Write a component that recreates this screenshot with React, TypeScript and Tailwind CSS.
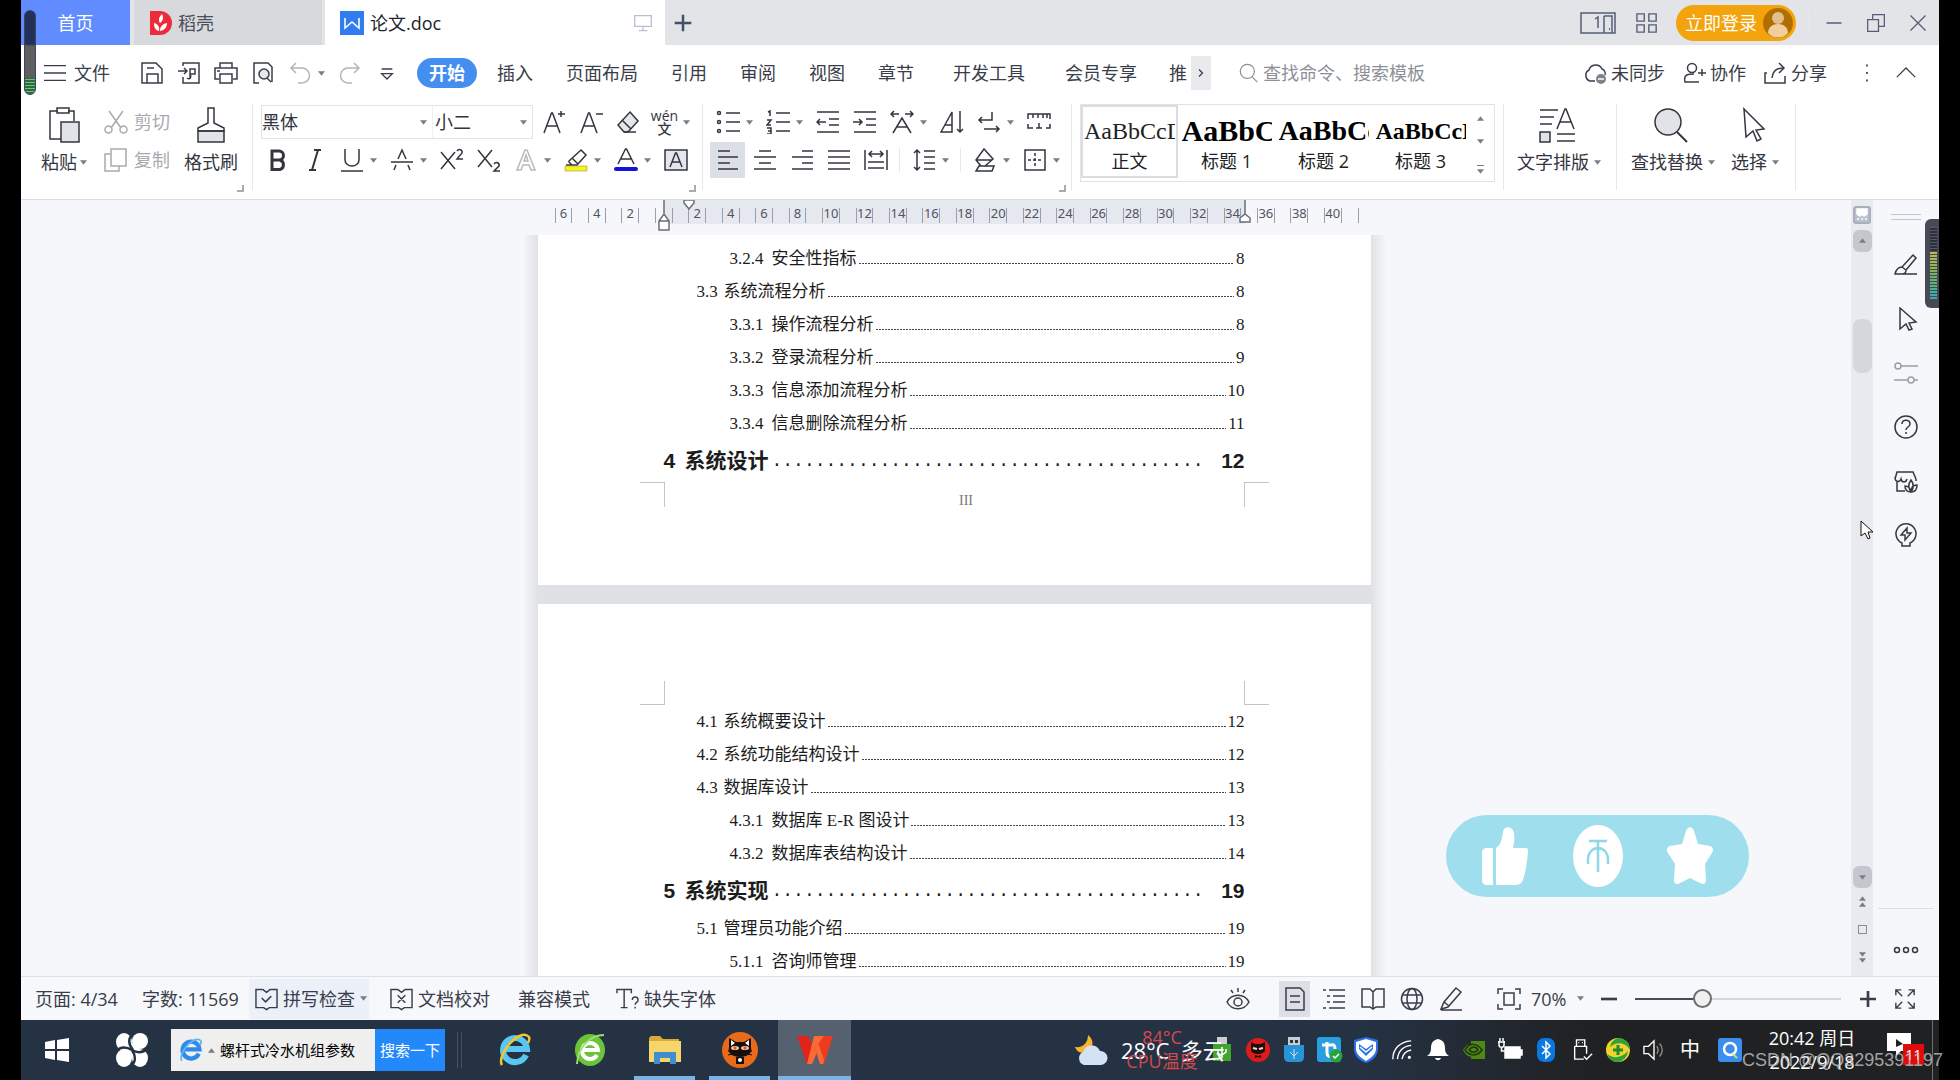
import type { ReactNode } from "react";

type SvgProps = { children: ReactNode; className?: string; box?: string };

function Svg({ children, className = "w-6 h-6", box = "0 0 24 24" }: SvgProps) {
  return (
    <svg
      viewBox={box}
      className={`shrink-0 ${className}`}
      fill="none"
      stroke="currentColor"
      strokeWidth="1.5"
      aria-hidden="true"
    >
      {children}
    </svg>
  );
}

function Caret() {
  return (
    <svg viewBox="0 0 8 5" className="w-[7px] h-[5px] shrink-0" aria-hidden="true">
      <path d="M0 0h8L4 5z" fill="#7b7d84" />
    </svg>
  );
}

function Sep({ className = "h-8" }: { className?: string }) {
  return <div className={`w-px shrink-0 bg-[#e6e7ea] ${className}`} />;
}

type ToolProps = { label: string; caret?: boolean; active?: boolean; children: ReactNode };

function Tool({ label, caret, active, children }: ToolProps) {
  return (
    <button type="button" aria-label={label} className={caret ? "flex items-center w-[50px] h-9" : "flex items-center w-[37px] h-9"}>
      <span className={active ? "flex items-center justify-center w-[35px] h-9 mx-px bg-[#dcdfe5]" : "flex items-center justify-center w-[37px] h-9"}>
        {children}
      </span>
      {caret && <Caret />}
    </button>
  );
}

/* ---------- title bar ---------- */

function TitleBar() {
  return (
    <header className="flex h-[45px] shrink-0 bg-[#e2e4e7] text-lg leading-6">
      <button type="button" className="w-[109px] bg-[#618cff] text-white">首页</button>
      <button type="button" className="flex items-center gap-[6px] w-[188px] ml-1 pl-4 bg-[#d8d9dc] text-[#4b4e5c]">
        <svg viewBox="0 0 22 24" className="w-[22px] h-6" aria-hidden="true">
          <path d="M0 0h10a12 12 0 0 1 0 24H0z" fill="#ea2c3c" />
          <path d="M10 12c-2-3-1-6 2-9 2 4 1 7-2 9zM9 20c-4-1-5-4-5-8 4 1 6 4 5 8zM10 20c0-4 2-7 7-8 0 4-2 7-7 8z" fill="#fff" />
        </svg>
        稻壳
      </button>
      <div className="flex items-center w-[340px] ml-[3px] pl-[15px] pr-3 bg-white text-[#22242c]">
        <svg viewBox="0 0 24 24" className="w-6 h-6 mr-[6px]" aria-hidden="true">
          <path d="M0 0h24v24H0z" fill="#2f7df0" />
          <path d="M5 7v10l7-6 7 6V7" fill="none" stroke="#fff" strokeWidth="1.6" />
        </svg>
        论文.doc
        <Svg className="w-5 h-5 ml-auto text-[#b9bfd0]">
          <path d="M2 3h20v13H2zM12 16v5M7 21h10" />
        </Svg>
      </div>
      <button type="button" aria-label="新建标签" className="w-9 flex items-center justify-center text-[#454f68]">
        <Svg className="w-5 h-5"><path d="M12 2v20M2 12h20" strokeWidth="3" /></Svg>
      </button>
      <div className="flex items-center ml-auto text-[#555d78]">
        <button type="button" aria-label="窗口布局">
          <Svg box="0 0 36 22" className="w-9 h-[22px]">
            <path d="M1 1h34v20H1zM24 4h8v17M24 4v17M15 7l3-2v11" />
            <path d="M29 17h1" strokeWidth="2" />
          </Svg>
        </button>
        <button type="button" aria-label="全部应用" className="ml-5">
          <Svg className="w-[22px] h-[22px]"><path d="M1 2h8v8H1zM14 2h8v8h-8zM1 14h8v8H1zM14 14h8v8h-8z" /></Svg>
        </button>
        <button type="button" className="flex items-center justify-between w-[120px] h-9 ml-[18px] pl-[9px] pr-[3px] rounded-full bg-[#f3a40c] text-white">
          立即登录
          <svg viewBox="0 0 30 30" className="w-[30px] h-[30px]" aria-hidden="true">
            <circle cx="15" cy="15" r="15" fill="#b06f00" />
            <circle cx="15" cy="10" r="6" fill="#e2c08a" />
            <path d="M5 25c0-12 20-12 20 0-5 6-15 6-20 0z" fill="#f1cf9c" />
          </svg>
        </button>
        <Sep className="h-7 ml-3 mr-1" />
        <button type="button" aria-label="最小化" className="flex items-center justify-center w-[42px] h-9">
          <Svg className="w-[18px] h-[18px]"><path d="M2 12h20" strokeWidth="2" /></Svg>
        </button>
        <button type="button" aria-label="还原" className="flex items-center justify-center w-[42px] h-9">
          <Svg className="w-5 h-5"><path d="M2 8h13v14H2zM8 8V2h14v14h-7" /></Svg>
        </button>
        <button type="button" aria-label="关闭" className="flex items-center justify-center w-[42px] h-9">
          <Svg className="w-5 h-5"><path d="M3 3l18 18M21 3L3 21" /></Svg>
        </button>
      </div>
    </header>
  );
}

/* ---------- menu row ---------- */

function MenuRow() {
  return (
    <nav className="flex items-center h-14 shrink-0 pl-[23px] bg-white text-lg leading-6 text-[#3a3d49]">
      <button type="button" className="flex items-center gap-2">
        <Svg className="w-[22px] h-6"><path d="M0 4h24M0 12h24M0 20h24" /></Svg>
        文件
      </button>
      <Sep className="ml-4 mr-[6px]" />
      <Tool label="保存"><Svg><path d="M2 2h14l6 6v14H2zM7 22v-9h11v9M7 7h7" /></Svg></Tool>
      <Tool label="输出为PDF"><Svg><path d="M6 5V2h16v20H6v-6M1 10h9M7 7l3 3-3 3M13 18V8h5v5h-5M10 17c3 2 5-1 3-4" /></Svg></Tool>
      <Tool label="打印"><Svg><path d="M6 7V2h12v5M5 18H1V7h22v11h-4M6 13h12v9H6zM3 10h3" /></Svg></Tool>
      <Tool label="打印预览"><Svg><path d="M8 22H3V2h14l4 4v15M20 21l-4-4" /><circle cx="13" cy="13" r="5" fill="#e4e6ec" /></Svg></Tool>
      <div className="flex text-[#b2b4ba]">
        <Tool label="撤销" caret><Svg><path d="M8 2L3 7l5 5M3 7h11a7 7 0 0 1 0 15h-4" /></Svg></Tool>
        <Tool label="恢复"><Svg><path d="M16 2l5 5-5 5M21 7H10a7 7 0 0 0 0 15h4" /></Svg></Tool>
      </div>
      <Tool label="更多"><Svg className="w-4 h-4"><path d="M4 6h16M4 13h16l-8 8z" strokeWidth="2" /></Svg></Tool>
      <Sep className="mr-[11px]" />
      <button type="button" className="w-[60px] h-[30px] rounded-full bg-[#448ef0] font-bold text-white">开始</button>
      <div className="flex gap-[33px] ml-5">
        <button type="button">插入</button>
        <button type="button">页面布局</button>
        <button type="button">引用</button>
        <button type="button">审阅</button>
        <button type="button">视图</button>
        <button type="button">章节</button>
      </div>
      <div className="flex gap-10 ml-[39px]">
        <button type="button">开发工具</button>
        <button type="button">会员专享</button>
      </div>
      <button type="button" className="w-[22px] ml-8 overflow-hidden text-left">推</button>
      <button type="button" aria-label="向右滚动" className="flex items-center justify-center w-5 h-[34px] bg-[#e8eaee]">
        <Svg className="w-3 h-3"><path d="M8 5l7 7-7 7" strokeWidth="2.500" /></Svg>
      </button>
      <label className="flex items-center gap-1 ml-7 text-[#8d9099]">
        <Svg className="w-5 h-6"><circle cx="10" cy="10" r="8.500" /><path d="M16 17l6 6" /></Svg>
        <input aria-label="搜索" placeholder="查找命令、搜索模板" className="w-[220px] outline-none placeholder:text-[#8d9099]" />
      </label>
      <div className="flex items-center gap-[17px] ml-auto">
        <button type="button" className="flex items-center gap-1">
          <Svg><path d="M12 20H7a6 6 0 0 1-1-11 7 7 0 0 1 13-1 5 5 0 0 1 3 6" /><circle cx="18" cy="18" r="5" fill="#7d8290" stroke="none" /><path d="M15 18h6" stroke="#fff" /></Svg>
          未同步
        </button>
        <button type="button" className="flex items-center gap-1">
          <Svg><circle cx="10" cy="7" r="4.500" /><path d="M17 21H3c-2-8 4-8 9-8M20 8v7M16 12h8" /></Svg>
          协作
        </button>
        <button type="button" className="flex items-center gap-1">
          <Svg><path d="M4 12H2v10h20v-7M16 2l5 5-5 5M21 7c-8 0-11 3-12 10" /></Svg>
          分享
        </button>
      </div>
      <Sep className="ml-[14px]" />
      <button type="button" aria-label="选项" className="flex justify-center w-[50px]">
        <Svg className="w-5 h-5"><path d="M11 3h2M11 12h2M11 21h2" strokeWidth="2.500" /></Svg>
      </button>
      <button type="button" aria-label="收起功能区" className="flex justify-center w-7 mr-[19px]">
        <Svg className="w-5 h-5"><path d="M1 17L12 6l11 11" /></Svg>
      </button>
    </nav>
  );
}

/* ---------- ribbon ---------- */

function Corner() {
  return <div className="w-[7px] h-[7px] self-end mt-[7px] border-r-2 border-b-2 border-[#a9abb2]" />;
}

function ClipboardGroup() {
  return (
    <div className="flex flex-col w-[231px] pl-4 pr-2">
      <div className="flex">
        <button type="button" className="flex flex-col items-center w-[54px] pt-[3px]">
          <Svg box="0 0 32 36" className="w-8 h-9">
            <path d="M10 4H2v28h12M20 4h6v10M9 1h12v5H9z" />
            <path d="M13 15h18v20H13z" fill="#e1e3e9" />
          </Svg>
          <span className="flex items-center gap-[3px] mt-[7px]">粘贴 <Caret /></span>
        </button>
        <div className="flex flex-col gap-[2px] ml-[13px] text-[#a8aab0]">
          <button type="button" className="flex items-center gap-[6px] h-9">
            <Svg><path d="M5 1l12 17M19 1L7 18" /><circle cx="4.500" cy="19.500" r="3.500" /><circle cx="19.500" cy="19.500" r="3.500" /></Svg>
            剪切
          </button>
          <button type="button" className="flex items-center gap-[6px] h-9">
            <Svg><path d="M7 1h15v17H7zM7 6H1v17h14v-5" /></Svg>
            复制
          </button>
        </div>
        <button type="button" className="flex flex-col items-center w-[54px] ml-[14px] pt-[3px]">
          <Svg box="0 0 28 36" className="w-7 h-9">
            <path d="M1 24h26v11H1z" fill="#e1e3e9" />
            <path d="M11 1h6v15l10 5v3H1v-3l10-5z" />
          </Svg>
          <span className="mt-[7px]">格式刷</span>
        </button>
      </div>
      <Corner />
    </div>
  );
}

function FontGroup() {
  return (
    <div className="flex flex-col ml-[6px]">
      <div className="flex items-center h-9 ml-[2px]">
        <div className="flex h-[34px] mr-[2px] border border-[#e1e2e6]">
          <label className="flex items-center w-[171px] pr-[5px] border-r border-[#eeeff2]">
            <select aria-label="字体" defaultValue="黑体" className="flex-1 appearance-none outline-none">
              <option>黑体</option>
              <option>宋体</option>
            </select>
            <Caret />
          </label>
          <label className="flex items-center w-[99px] pl-[2px] pr-[5px]">
            <select aria-label="字号" defaultValue="小二" className="flex-1 min-w-0 appearance-none outline-none">
              <option>小二</option>
              <option>小四</option>
            </select>
            <Caret />
          </label>
        </div>
        <Tool label="增大字号"><Svg><path d="M2 23L9.500 3h1L18 23M5 16h10M19 1v6M16 4h7" /></Svg></Tool>
        <Tool label="减小字号"><Svg><path d="M2 23L9.500 3h1L18 23M5 16h10M17 4h7" /></Svg></Tool>
        <Tool label="清除格式"><Svg><path d="M14 2l8 9-10 11H8l-6-7z" fill="#e4e6ec" /><path d="M6 10l9 9M8 22h12" /></Svg></Tool>
        <Tool label="拼音指南" caret>
          <span className="flex flex-col items-center text-sm leading-[13px] font-medium">
            <span>wén</span>
            <span>文</span>
          </span>
        </Tool>
      </div>
      <div className="flex items-center h-9 mt-[2px]">
        <Tool label="加粗"><Svg><path d="M6 3h7a4.500 4.500 0 0 1 0 9H6zM6 12h8a5 5 0 0 1 0 9.500H6z" strokeWidth="3" /></Svg></Tool>
        <Tool label="倾斜"><Svg><path d="M11 2h7M6 22h7M15 2L9 22" strokeWidth="2" /></Svg></Tool>
        <Tool label="下划线" caret><Svg><path d="M5 1v11a7 6 0 0 0 14 0V1M1 23h22" /></Svg></Tool>
        <Tool label="删除线" caret><Svg><path d="M1 14h22M8 11l4-9 4 9M6 17l-2 5M18 17l2 5" /></Svg></Tool>
        <Tool label="上标"><Svg><path d="M1 4l14 17M15 4L1 21M17 3c2-3 6-1 5 2l-5 6h6" /></Svg></Tool>
        <Tool label="下标"><Svg><path d="M1 2l14 17M15 2L1 19M17 16c2-3 6-1 5 2l-5 5h6" /></Svg></Tool>
        <Tool label="文字效果" caret><Svg className="w-6 h-6 text-[#b7b9c0]"><path d="M3 22L11 2h2l8 20h-4l-2-5H9l-2 5zM10 13h4l-2-6z" /></Svg></Tool>
        <Tool label="突出显示" caret>
          <Svg>
            <path d="M17 2l5 5-9 10H8l-3-3v-1zM8 10l6 6M2 17h7" />
            <path d="M1 18h22v5H1z" fill="#f9f11b" stroke="#8b8b3a" strokeWidth="0.5" />
          </Svg>
        </Tool>
        <Tool label="字体颜色" caret>
          <Svg>
            <path d="M4 16L11.500 1h1L20 16M7 11h10" />
            <path d="M2 21h20" stroke="#1414d8" strokeWidth="4" strokeLinecap="round" />
          </Svg>
        </Tool>
        <Tool label="字符底纹"><Svg><path d="M1 2h22v20H1z" fill="#e4e6ec" /><path d="M6 19l5.500-14h1L18 19M8 14h8" /></Svg></Tool>
      </div>
      <Corner />
    </div>
  );
}

function ParagraphGroup() {
  return (
    <div className="flex flex-col ml-[6px]">
      <div className="flex items-center h-9">
        <Tool label="项目符号" caret><Svg><path d="M10 3h14M10 12h14M10 21h14" /><circle cx="3" cy="3" r="1.500" /><circle cx="3" cy="12" r="1.500" /><circle cx="3" cy="21" r="1.500" /></Svg></Tool>
        <Tool label="编号" caret><Svg><path d="M10 3h14M10 12h14M10 21h14M2 2l2-1v5M1 10h4l-4 5h4M1 18h4v6H1M2 21h3" /></Svg></Tool>
        <Tool label="减少缩进量"><Svg><path d="M1 2h22M13 9h10M13 15h10M1 22h22M1 12h9M4 9l-3 3 3 3" /></Svg></Tool>
        <Tool label="增加缩进量"><Svg><path d="M1 2h22M13 9h10M13 15h10M1 22h22M0 12h9M6 9l3 3-3 3" /></Svg></Tool>
        <Tool label="中文版式" caret><Svg><path d="M3 23L12 8l9 15M7 17h10M1 4h8M4 1L1 4l3 3M23 4h-8M20 1l3 3-3 3" /></Svg></Tool>
        <Tool label="排序"><Svg><path d="M1 22L12 2v20zM5 15h7M20 1v21M17 19l3 3 3-3" /></Svg></Tool>
        <Tool label="换行标记" caret><Svg><path d="M15 2v8H2M5 7l-3 3 3 3M7 19h15M19 16l3 3-3 3" /></Svg></Tool>
        <Tool label="制表位"><Svg><path d="M1 9V4h22v5M6 4v4M11 4v4M16 4v4M20 4v4M1 14v4h5M9 18h6M12 13v5M23 14v4h-4" /></Svg></Tool>
      </div>
      <div className="flex items-center h-9 mt-[2px]">
        <Tool label="左对齐" active><Svg><path d="M2 3h12M2 9h20M2 15h12M2 21h20" /></Svg></Tool>
        <Tool label="居中"><Svg><path d="M6 3h12M1 9h22M6 15h12M1 21h22" /></Svg></Tool>
        <Tool label="右对齐"><Svg><path d="M12 3h11M2 9h21M12 15h11M2 21h21" /></Svg></Tool>
        <Tool label="两端对齐"><Svg><path d="M1 3h22M1 9h22M1 15h22M1 21h22" /></Svg></Tool>
        <Tool label="分散对齐"><Svg><path d="M1 2v20M23 2v20M5 6h14M8 3L5 6l3 3M16 3l3 3-3 3M4 14h16M4 20h16" /></Svg></Tool>
        <div className="flex justify-center w-[11px]"><Sep className="h-6" /></div>
        <Tool label="行距" caret><Svg><path d="M5 2v20M2 5l3-3 3 3M2 19l3 3 3-3M12 3h11M12 9h11M12 15h11M12 21h11" /></Svg></Tool>
        <div className="flex justify-center w-[11px]"><Sep className="h-6" /></div>
        <Tool label="底纹颜色" caret><Svg><path d="M11 1l9 10-8 7H8l-5-6zM3 12h16M6 18h15l-2 5H3z" /></Svg></Tool>
        <Tool label="边框" caret><Svg><path d="M2 2h20v20H2z" /><path d="M12 5v14M5 12h14" strokeDasharray="3 2" /></Svg></Tool>
      </div>
      <Corner />
    </div>
  );
}

/* the sample line is cut off by the cell, as in the gallery of any word processor */
const styles = [
  { name: "标题 1", sample: "AaBbC", look: "text-[30px]" },
  { name: "标题 2", sample: "AaBbCc", look: "text-[28px]" },
  { name: "标题 3", sample: "AaBbCcD", look: "text-2xl" },
];

function StyleGallery() {
  return (
    <div className="flex w-[415px] h-[78px] ml-2 border border-[#e1e2e6] text-[#222]">
      <button type="button" className="flex flex-col items-center w-[97px] h-[73px] pt-[6px] border-2 border-[#dcdde2] overflow-hidden">
        <span className="w-[91px] overflow-hidden text-left text-2xl leading-9 whitespace-nowrap font-['Liberation_Serif']">AaBbCcD</span>
        <span>正文</span>
      </button>
      {styles.map((s) => (
        <button key={s.name} type="button" className="flex flex-col items-center w-[97px] pt-2 px-[2px]">
          <span className={`w-[90px] overflow-hidden whitespace-nowrap text-left leading-9 font-bold text-black font-['Liberation_Serif'] ${s.look}`}>
            {s.sample}
          </span>
          <span>{s.name}</span>
        </button>
      ))}
      <div className="flex flex-col items-center w-[22px] pt-2 gap-[18px]">
        <button type="button" aria-label="上一行" className="flex h-2 rotate-180"><Caret /></button>
        <button type="button" aria-label="下一行" className="flex h-2"><Caret /></button>
        <button type="button" aria-label="更多样式" className="flex flex-col items-center gap-[3px]">
          <span className="w-[7px] h-px bg-[#7b7d84]" />
          <Caret />
        </button>
      </div>
    </div>
  );
}

function BigButton({ label, children }: { label: string; children: ReactNode }) {
  return (
    <button type="button" className="flex flex-col items-center pt-[3px]">
      <span className="pr-1">{children}</span>
      <span className="flex items-center gap-[5px] mt-[7px]">{label} <Caret /></span>
    </button>
  );
}

function Ribbon() {
  return (
    <section className="flex h-[99px] shrink-0 pt-[3px] bg-white border-b border-[#dcdee3] text-lg leading-6 text-[#33363f]">
      <ClipboardGroup />
      <Sep className="h-[86px]" />
      <FontGroup />
      <Sep className="h-[86px] ml-[6px]" />
      <ParagraphGroup />
      <Sep className="h-[86px] ml-[5px]" />
      <StyleGallery />
      <Sep className="h-[86px] ml-2 mr-[13px]" />
      <BigButton label="文字排版">
        <Svg box="0 0 36 36" className="w-9 h-9"><path d="M1 3h18M1 10h14M1 17h12M18 34h18M18 27h18M18 22L26 2h1l8 20M21 15h11" /><path d="M1 25h10v10H1z" fill="#e1e3e9" /></Svg>
      </BigButton>
      <Sep className="h-[86px] ml-[15px] mr-[14px]" />
      <BigButton label="查找替换">
        <Svg box="0 0 36 36" className="w-9 h-9"><circle cx="15" cy="15" r="13" fill="#e1e3e9" /><path d="M24 25l10 10" strokeWidth="2" /></Svg>
      </BigButton>
      <div className="ml-4">
        <BigButton label="选择">
          <Svg box="0 0 36 36" className="w-9 h-9"><path d="M9 2l20 20-8 1 5 9-4 2-4-10-7 6z" /></Svg>
        </BigButton>
      </div>
      <Sep className="h-[86px] ml-4" />
    </section>
  );
}

/* ---------- document ---------- */

const rulerMarks = ["6", "4", "2", ""];
for (let n = 2; n <= 40; n += 2) rulerMarks.push(String(n));

function Ruler() {
  return (
    <div className="relative w-[833px] h-[35px] pl-[17px] pr-3 pt-2 mx-auto">
      <div className="absolute left-[126px] top-0 w-[581px] h-6 bg-[#e6e8ef]" />
      <div className="relative flex h-[15px] border-r border-[#9c9fab] text-[13px] leading-[11px] text-[#50545f] font-['Noto_Sans']">
        {rulerMarks.map((m, i) => (
          <div key={i} className="flex flex-1">
            <div className="flex flex-1 justify-center border-l border-[#9c9fab]">
              <span className="w-0 flex justify-center">{m}</span>
            </div>
            <div className="flex-1 border-l border-[#9c9fab]" />
          </div>
        ))}
      </div>
      <Svg box="0 0 12 36" className="absolute left-[120px] top-0 w-3 h-9 text-[#6b6e78]">
        <path d="M6 0v14M1 21l5-7 5 7v9H1zM1 21h10" fill="#fff" />
      </Svg>
      <Svg box="0 0 12 10" className="absolute left-[145px] top-0 w-3 h-[10px] text-[#6b6e78]">
        <path d="M1 0h10v3L6 9 1 3z" fill="#fff" />
      </Svg>
      <Svg box="0 0 12 24" className="absolute left-[701px] top-0 w-3 h-6 text-[#6b6e78]">
        <path d="M6 0v14M1 18l5-4 5 4v4H1z" fill="#fff" />
      </Svg>
    </div>
  );
}

type Entry = { level: 1 | 2 | 3; no: string; title: string; page: string };

const firstPage: Entry[] = [
  { level: 3, no: "3.2.4", title: "安全性指标", page: "8" },
  { level: 2, no: "3.3", title: "系统流程分析", page: "8" },
  { level: 3, no: "3.3.1", title: "操作流程分析", page: "8" },
  { level: 3, no: "3.3.2", title: "登录流程分析", page: "9" },
  { level: 3, no: "3.3.3", title: "信息添加流程分析", page: "10" },
  { level: 3, no: "3.3.4", title: "信息删除流程分析", page: "11" },
  { level: 1, no: "4", title: "系统设计", page: "12" },
];

const secondPage: Entry[] = [
  { level: 2, no: "4.1", title: "系统概要设计", page: "12" },
  { level: 2, no: "4.2", title: "系统功能结构设计", page: "12" },
  { level: 2, no: "4.3", title: "数据库设计", page: "13" },
  { level: 3, no: "4.3.1", title: "数据库 E-R 图设计", page: "13" },
  { level: 3, no: "4.3.2", title: "数据库表结构设计", page: "14" },
  { level: 1, no: "5", title: "系统实现", page: "19" },
  { level: 2, no: "5.1", title: "管理员功能介绍", page: "19" },
  { level: 3, no: "5.1.1", title: "咨询师管理", page: "19" },
];

const dots = ".".repeat(40);

function TocRow({ level, no, title, page }: Entry) {
  if (level === 1) {
    return (
      <li className="flex items-center h-[42px] text-[21px] leading-7 font-bold font-['Liberation_Sans','Noto_Sans_CJK_SC',sans-serif]">
        <span className="w-[21px]">{no}</span>
        <span>{title}</span>
        <span className="flex-1 pl-[3px] overflow-hidden text-lg leading-7 font-normal font-['Liberation_Mono']">{dots}</span>
        <span>{page}</span>
      </li>
    );
  }
  return (
    <li
      className={
        level === 2
          ? "flex items-center h-[33px] pl-[33px] text-[17px] leading-6"
          : "flex items-center h-[33px] pl-[66px] text-[17px] leading-6"
      }
    >
      <span className={level === 2 ? "w-[27px]" : "w-[42px]"}>{no}</span>
      <span>{title}</span>
      <span className="flex-1 self-end h-px mx-[2px] mb-[11px] bg-[repeating-linear-gradient(90deg,#444_0_2px,transparent_2px_3px)]" />
      <span>{page}</span>
    </li>
  );
}

function Document() {
  return (
    <main className="flex flex-col flex-1 min-w-0 pl-9 bg-[#f5f7fb]">
      <Ruler />
      <div className="flex-1 min-h-0 overflow-hidden">
        <div className="w-[861px] mx-auto px-[14px] bg-[linear-gradient(90deg,#f3f5f9_0,#dfe1e5_14px,#dfe1e5_calc(100%-14px),#f3f5f9_100%)] text-[#1c1c1c] font-['Liberation_Serif','Noto_Sans_CJK_SC',serif]">
          <div className="h-[350px] pt-[7px] bg-white">
            <ol className="px-[126px]">
              {firstPage.map((e) => <TocRow key={e.no} {...e} />)}
            </ol>
            <div className="flex justify-between px-[102px]">
              <div className="w-[25px] h-[25px] border-t border-r border-[#c4c4c8]" />
              <span className="pt-[10px] pl-6 text-sm leading-[18px] text-[#777]">III</span>
              <div className="w-[25px] h-[25px] border-t border-l border-[#c4c4c8]" />
            </div>
          </div>
          <div className="h-[450px] mt-[19px] pt-[77px] bg-white">
            <div className="flex justify-between px-[102px]">
              <div className="w-[25px] h-6 border-b border-r border-[#c4c4c8]" />
              <div className="w-[25px] h-6 border-b border-l border-[#c4c4c8]" />
            </div>
            <ol className="px-[126px]">
              {secondPage.map((e) => <TocRow key={e.no} {...e} />)}
            </ol>
          </div>
        </div>
      </div>
    </main>
  );
}

function ScrollColumn() {
  return (
    <div className="flex flex-col items-center w-[22px] pt-[6px] pb-[5px] bg-[#e9eaef] text-[#8a8c98]">
      <button type="button" aria-label="标尺">
        <svg viewBox="0 0 18 18" className="w-[18px] h-[18px]" aria-hidden="true">
          <rect x="1" y="1" width="16" height="16" rx="2" fill="#b9c0ce" stroke="#a9afbd" strokeWidth="2" />
          <path d="M4 3h10v5l-3 2-2-2-2 2-3-2zM4 13h2M8 13h2M12 13h2" fill="#fff" stroke="#fff" strokeWidth="1.500" />
        </svg>
      </button>
      <button type="button" aria-label="向上" className="flex items-center justify-center w-[19px] h-[22px] mt-[6px] rounded-md bg-[#c6c6ce] rotate-180"><Caret /></button>
      <div className="w-[19px] h-[54px] mt-[67px] rounded-lg bg-[#d6d7dc]" />
      <button type="button" aria-label="向下" className="flex items-center justify-center w-[19px] h-[22px] mt-auto rounded-md bg-[#c6c6ce]"><Caret /></button>
      <button type="button" aria-label="上一页" className="flex flex-col items-center justify-center gap-px h-7 rotate-180"><Caret /><Caret /></button>
      <button type="button" aria-label="选择浏览对象" className="flex items-center h-[27px]"><span className="w-[9px] h-[9px] border border-[#8a8c98]" /></button>
      <button type="button" aria-label="下一页" className="flex flex-col items-center justify-center gap-px h-7"><Caret /><Caret /></button>
    </div>
  );
}

function SideBar() {
  const cell = "flex items-center justify-center w-full h-[54px]";
  return (
    <aside className="flex flex-col items-center w-[66px] pt-[14px] bg-[#f5f7fb] text-[#363943]">
      <div className="w-[30px] h-[6px] mb-[18px] border-y border-[#c3c5cc]" />
      <button type="button" aria-label="批注" className={cell}><Svg><path d="M8 14L19 2l3 3L12 17M8 14c-4 0-6 3-7 7h22M8 14l4 3c0 3-2 4-4 4" /></Svg></button>
      <button type="button" aria-label="选择" className={cell}><Svg><path d="M6 1l16 14-7 1 3 6-3 1-3-6-6 5z" /></Svg></button>
      <button type="button" aria-label="属性" className={`${cell} text-[#9b9da5]`}><Svg><circle cx="4" cy="5" r="3" /><path d="M7 5h17M0 19h14M20 19h4" /><circle cx="17" cy="19" r="3" /></Svg></button>
      <button type="button" aria-label="帮助" className={cell}><Svg><circle cx="12" cy="12" r="11" /><path d="M8 9c0-5 8-5 8 0 0 3-4 3-4 6M12 17v2" /></Svg></button>
      <button type="button" aria-label="稻壳商城" className={cell}><Svg><path d="M11 22H3V12M1 10l2-7h16l3 7M1 8c0 6 5 5 6 2 1 4 5 4 6 0M22 10v2" /><path d="M17 11c-3 4-3 8 0 12 3-4 3-8 0-12zM17 23c-4 0-6-2-6-6 3 0 5 2 6 6zM17 23c0-4 2-7 6-7 0 4-2 7-6 7z" /></Svg></button>
      <button type="button" aria-label="智能" className={cell}><Svg><path d="M8 20a10 10 0 1 1 8 0v3H8zM13 5l-6 7h4v5l6-7h-4z" /></Svg></button>
      <button type="button" aria-label="更多工具" className="flex justify-center w-14 h-[68px] mt-auto pt-7 border-t border-[#dddfe5]">
        <Svg className="w-[26px] h-[26px]" box="0 0 26 26"><circle cx="4" cy="13" r="2.500" /><circle cx="13" cy="13" r="2.500" /><circle cx="22" cy="13" r="2.500" /></Svg>
      </button>
    </aside>
  );
}

/* Floating like / coin / favourite bar that lies over the document */
function ReactionPill() {
  return (
    <div className="absolute right-[190px] bottom-[79px] flex items-center justify-between w-[303px] h-[82px] px-9 rounded-full bg-[#9fdfed] text-white">
      <button type="button" aria-label="点赞">
        <svg viewBox="0 0 46 58" className="w-[46px] h-[58px]" fill="#fff" aria-hidden="true">
          <path d="M5 21h6v37H5c-3 0-5-2-5-6V26c0-3 2-5 5-5zM14 21c5-3 6-9 7-16 1-7 10-6 11 1 1 6 0 10-1 15h13c2 0 2 2 2 4-1 12-3 22-5 28-1 3-4 5-8 5H14z" />
        </svg>
      </button>
      <button type="button" aria-label="投币">
        <svg viewBox="0 0 50 62" className="w-[50px] h-[62px]" aria-hidden="true">
          <ellipse cx="25" cy="31" rx="25" ry="31" fill="#fff" />
          <path d="M16 16h18M25 16v31M15 39v-4c0-16 20-16 20 0v4" fill="none" stroke="#8fd8e8" strokeWidth="2.500" />
        </svg>
      </button>
      <button type="button" aria-label="收藏">
        <svg viewBox="0 0 46 58" className="w-[46px] h-[58px]" fill="#fff" aria-hidden="true">
          <path d="M19 4c2-5 6-5 8 0l4 13 12 2c3 1 4 4 2 7l-7 11 1 16c0 4-3 5-6 3l-10-5-10 5c-3 2-6 1-6-3l1-16-7-11c-2-3-1-6 2-7l12-2z" />
        </svg>
      </button>
    </div>
  );
}

/* ---------- status bar ---------- */

function StatusBar() {
  const cell = "flex items-center justify-center w-[39px] h-9";
  return (
    <footer className="flex items-center h-11 shrink-0 pl-[14px] pr-[15px] bg-[#f6f8fb] border-t border-[#dcdfe4] text-lg leading-6 text-[#3a3d49]">
      <span className="w-[107px]">页面: 4/34</span>
      <span className="w-[107px]">字数: 11569</span>
      <button type="button" className="flex items-center gap-[5px] w-[120px] h-10 pl-[6px] bg-[#ebf0f9]">
        <Svg className="w-[23px] h-6"><path d="M8 2H1v19h8l3 2 3-2h8V2h-7M8 2l4 3 4-3M7 11l4 4 6-6" /></Svg>
        拼写检查
        <Caret />
      </button>
      <button type="button" className="flex items-center gap-[5px] ml-[21px]">
        <Svg className="w-[23px] h-6"><path d="M8 2H1v19h8l3 2 3-2h8V2h-7M8 2l4 3 4-3M8 8l8 8M16 8l-8 8" /></Svg>
        文档校对
      </button>
      <span className="ml-7">兼容模式</span>
      <button type="button" className="flex items-center gap-[5px] ml-[26px]">
        <Svg className="w-[23px] h-6"><path d="M1 6V2h15v4M8.500 2v19M5 21h7M17 13c0-4 6-4 6 0 0 3-3 2-3 5M20 20v2" /></Svg>
        缺失字体
      </button>

      <button type="button" aria-label="护眼模式" className={`${cell} ml-auto mr-[18px]`}><Svg><path d="M1 15c5-9 17-9 22 0-5 9-17 9-22 0zM12 1v4M5 3l2 3M19 3l-2 3" /><circle cx="12" cy="15" r="4" /></Svg></button>
      <button type="button" aria-label="页面视图" className={cell}>
        <span className="flex items-center justify-center w-[31px] h-9 bg-[#dcdfe5]"><Svg><path d="M3 1h14l4 4v18H3zM7 9h10M7 15h10" /></Svg></span>
      </button>
      <button type="button" aria-label="大纲" className={cell}><Svg><path d="M1 3h3M7 3h16M5 9h3M11 9h12M5 15h3M11 15h12M1 21h3M7 21h16" /></Svg></button>
      <button type="button" aria-label="阅读版式" className={cell}><Svg><path d="M1 2h8l3 3 3-3h8v18h-8l-3 2-3-2H1zM12 5v16" /></Svg></button>
      <button type="button" aria-label="Web版式" className={cell}><Svg><circle cx="12" cy="12" r="10.500" /><ellipse cx="12" cy="12" rx="5" ry="10.500" /><path d="M2 8h20M2 16h20" /></Svg></button>
      <button type="button" aria-label="写作模式" className={cell}><Svg><path d="M17 1l5 4L9 20l-7 2 3-7zM5 15l5 4M2 23h21" /></Svg></button>
      <button type="button" aria-label="适应页面" className={`${cell} ml-[19px]`}><Svg><path d="M1 7V2h5M18 2h5v5M23 17v5h-5M6 22H1v-5M7 6h10v12H7z" /></Svg></button>
      <label className="flex items-center gap-[6px] w-[60px] ml-[3px]">
        <select aria-label="显示比例" defaultValue="70%" className="w-10 appearance-none outline-none">
          <option>70%</option>
          <option>100%</option>
        </select>
        <Caret />
      </label>
      <button type="button" aria-label="缩小" className="flex items-center justify-center w-9"><Svg className="w-4 h-4"><path d="M0 12h24" strokeWidth="4" /></Svg></button>
      <input
        type="range"
        aria-label="缩放"
        defaultValue={31}
        className="w-[206px] h-[2px] ml-2 mr-[10px] appearance-none outline-none bg-linear-to-r from-[#4a4d58] from-33% to-[#d3d5da] to-33% [&::-webkit-slider-thumb]:appearance-none [&::-webkit-slider-thumb]:w-[19px] [&::-webkit-slider-thumb]:h-[19px] [&::-webkit-slider-thumb]:rounded-full [&::-webkit-slider-thumb]:border-2 [&::-webkit-slider-thumb]:border-[#6b6d75] [&::-webkit-slider-thumb]:bg-[#f0f0ee]"
      />
      <button type="button" aria-label="放大" className="flex items-center justify-center w-[34px]"><Svg className="w-4 h-4"><path d="M0 12h24M12 0v24" strokeWidth="4" /></Svg></button>
      <button type="button" aria-label="全屏" className={cell}><Svg className="w-[22px] h-6"><path d="M2 8V2h6M2 2l7 7M22 8V2h-6M22 2l-7 7M2 16v6h6M2 22l7-7M22 16v6h-6M22 22l-7-7" /></Svg></button>
    </footer>
  );
}

/* ---------- taskbar ---------- */

function TaskIcon({ label, running, active, children }: { label: string; running?: boolean; active?: boolean; children: ReactNode }) {
  return (
    <button type="button" aria-label={label} className={active ? "flex w-[75px] h-full px-px" : "flex w-[75px] h-full px-[7px]"}>
      <span
        className={`flex flex-1 items-center justify-center h-full ${active ? "bg-[#55616f]" : ""} ${running ? "pt-1 border-b-4 border-[#7db2e4]" : ""}`}
      >
        {children}
      </span>
    </button>
  );
}

function BrowserE({ fill, ring, className }: { fill: string; ring: string; className: string }) {
  return (
    <svg viewBox="0 0 34 34" className={className} fill="none" aria-hidden="true">
      <path d="M28 22a12 12 0 1 1 1-6H8" stroke={fill} strokeWidth="6" />
      <path d="M4 32C-2 22 22-6 31 4c1 2 0 4-1 6" stroke={ring} strokeWidth="2.500" />
    </svg>
  );
}

function Tray({ children }: { children: ReactNode }) {
  return <span className="flex items-center justify-center w-9 h-9 text-white">{children}</span>;
}

function Taskbar() {
  return (
    <footer className="relative flex items-center h-[60px] shrink-0 bg-linear-to-r from-[#253243] from-70% to-[#202123] to-82% text-white">
      <button type="button" aria-label="开始菜单" className="flex justify-center w-[72px]">
        <svg viewBox="0 0 24 24" className="w-6 h-6" fill="#fff" aria-hidden="true">
          <path d="M0 4l10-2v9H0zM12 2l12-2v11H12zM0 13h10v9L0 20zM12 13h12v11l-12-2z" />
        </svg>
      </button>
      <button type="button" aria-label="快捷助手" className="flex justify-center w-[78px]">
        <svg viewBox="0 0 34 34" className="w-[34px] h-[34px]" fill="#fff" aria-hidden="true">
          <ellipse cx="9" cy="9" rx="8" ry="9" />
          <ellipse cx="25" cy="8" rx="8" ry="8" />
          <ellipse cx="9" cy="25" rx="8" ry="9" />
          <ellipse cx="25" cy="25" rx="8" ry="9" />
          <path d="M10 10h14v14H10z" />
          <path d="M18 1c-5 4-5 10 0 16M33 15c-5 5-11 5-16 2M16 33c5-4 5-10 1-16M1 18c5-5 11-4 16-1" fill="none" stroke="#253243" strokeWidth="2.500" />
        </svg>
      </button>
      <form className="flex h-[42px] text-[15px] leading-5" onSubmit={(e) => e.preventDefault()}>
        <label className="flex items-center w-[204px] pl-2 bg-[#efefef] text-black">
          <BrowserE fill="#2f8bea" ring="#5fb6f4" className="w-6 h-6" />
          <span className="flex mx-[5px] rotate-180"><Caret /></span>
          <input aria-label="搜索内容" defaultValue="螺杆式冷水机组参数" className="w-[150px] outline-none" />
        </label>
        <button type="submit" className="w-[70px] bg-[#2389fb]">搜索一下</button>
      </form>
      <div className="w-[5px] h-9 ml-3 mr-[15px] border-x border-[#46505f]" />
      <div className="flex h-full">
        <TaskIcon label="Internet Explorer"><BrowserE fill="#58c8f3" ring="#f3c530" className="w-[34px] h-[34px]" /></TaskIcon>
        <TaskIcon label="360浏览器">
          <svg viewBox="0 0 32 34" className="w-8 h-[34px]" aria-hidden="true">
            <ellipse cx="16" cy="17" rx="15" ry="16" fill="#6cc33a" />
            <path d="M23 22a8 8 0 1 1 1-5H9" fill="none" stroke="#fff" strokeWidth="4" />
            <path d="M3 31C4 12 18 2 30 2" fill="none" stroke="#9fe070" strokeWidth="2" />
          </svg>
        </TaskIcon>
        <TaskIcon label="文件资源管理器" running>
          <svg viewBox="0 0 34 28" className="w-[34px] h-7" aria-hidden="true">
            <path d="M1 2l2-2h9l3 3h16v4H1z" fill="#dba93a" />
            <path d="M1 5h32v21H1z" fill="#f7d56a" />
            <path d="M6 28V16h22v12h-6v-6H12v6z" fill="#3f8fd0" />
          </svg>
        </TaskIcon>
        <TaskIcon label="直播助手" running>
          <svg viewBox="0 0 36 36" className="w-9 h-9" aria-hidden="true">
            <circle cx="18" cy="18" r="18" fill="#ea6a1c" />
            <path d="M7 6l7 4h8l7-4v10c2 5-4 9-11 9S5 21 7 16zM14 25h8v7h-8z" fill="#15100e" />
            <path d="M9 8l4 3-4 3zM27 8l-4 3 4 3z" fill="#fff" />
            <ellipse cx="13" cy="16" rx="4" ry="2" fill="#f7c9a8" />
            <ellipse cx="23" cy="16" rx="4" ry="2" fill="#f7c9a8" />
            <circle cx="13" cy="16" r="1.500" fill="#e04a10" />
            <circle cx="23" cy="16" r="1.500" fill="#e04a10" />
            <path d="M6 19l5 1M6 23l5-1M30 19l-5 1M30 23l-5-1" stroke="#15100e" />
            <circle cx="18" cy="28" r="2" fill="#fff" />
          </svg>
        </TaskIcon>
        <TaskIcon label="WPS Office" running active>
          <svg viewBox="0 0 36 28" className="w-9 h-7" aria-hidden="true">
            <path d="M0 0h11l7 14-5 14h-3z" fill="#e3221c" />
            <path d="M17 0h10L15 28h-5z" fill="#fb6a35" />
            <path d="M27 0h9l-9 28h-4l-5-16z" fill="#ee3a20" />
            <path d="M18 12l3-6 6 18-1 4h-3z" fill="#fb6a35" />
          </svg>
        </TaskIcon>
      </div>

      <button type="button" aria-label="天气" className="relative flex items-center ml-auto text-[22px] leading-7">
        <svg viewBox="0 0 34 30" className="w-[34px] h-[30px] mr-[12px]" aria-hidden="true">
          <path d="M13 0c8 6 5 17-5 18-4 0-7-3-8-6 8 1 13-4 13-12z" fill="#f5b52e" />
          <path d="M9 30a7 7 0 0 1-1-13 9 9 0 0 1 17-1 7 7 0 0 1 1 14z" fill="#d4e2f6" />
        </svg>
        <span className="w-[99px] whitespace-nowrap">28°C&nbsp; 多云</span>
        <span className="absolute left-[51px] -top-[10px] flex flex-col items-center w-[72px] text-lg leading-6 whitespace-nowrap text-[#d2484f]">
          <span>84°C</span>
          <span>CPU温度</span>
        </span>
      </button>
      <div className="flex -ml-4">
        <Tray><svg viewBox="0 0 18 26" className="w-[18px] h-[26px]" aria-hidden="true"><path d="M4 0h10v7H4z" fill="#ccc" /><path d="M0 7h18v17H0z" fill="#3fa52e" /><path d="M9 21v-11M5 13v3l4 3M13 12v3l-4 3" fill="none" stroke="#fff" strokeWidth="1.500" /></svg></Tray>
        <Tray>
          <svg viewBox="0 0 24 24" className="w-6 h-6" aria-hidden="true">
            <circle cx="12" cy="12" r="12" fill="#e01a1a" />
            <path d="M5 4l4 2h6l4-2v9c-3 4-11 4-14 0zM9 17l3 1 3-1v3l-3-1-3 1z" fill="#1a0f0c" />
            <path d="M7 10l4 1M17 10l-4 1" stroke="#f3d9b8" strokeWidth="2" />
          </svg>
        </Tray>
        <Tray><svg viewBox="0 0 20 26" className="w-5 h-[26px]" aria-hidden="true"><path d="M4 0h12v8H4z" fill="#c9ccd0" /><path d="M6 3h3v3H6zM11 3h3v3h-3z" fill="#333" /><path d="M0 8h20v12c0 3-2 5-5 5H5c-3 0-5-2-5-5z" fill="#2794d8" /><path d="M10 22V12M6 15l4 4 4-4" fill="none" stroke="#c6e6fa" /></svg></Tray>
        <Tray><svg viewBox="0 0 26 26" className="w-[26px] h-[26px]" aria-hidden="true"><rect width="24" height="25" rx="3" fill="#2a9fe0" /><path d="M5 8h5M10 5v11c0 3 2 4 5 3M10 8h4c3-1 4 1 4 4" fill="none" stroke="#fff" strokeWidth="3" /><circle cx="19" cy="19" r="6.500" fill="#28a23a" /><path d="M16 19l2 2 4-4" fill="none" stroke="#fff" strokeWidth="1.500" /></svg></Tray>
        <Tray><svg viewBox="0 0 24 26" className="w-6 h-[26px]" aria-hidden="true"><path d="M12 0l12 3v9c0 7-6 12-12 14C6 24 0 19 0 12V3z" fill="#2b72e8" /><path d="M12 2l10 3v7c0 5-5 9-10 12C7 21 2 17 2 12V5z" fill="#fff" /><path d="M5 7l7 5 7-5v5l-7 7-7-7z" fill="#2b72e8" /><path d="M6 10l6 5 6-5" fill="none" stroke="#fff" strokeWidth="1.500" /></svg></Tray>
        <Tray><Svg className="w-[22px] h-[22px]"><path d="M2 22C2 10 10 3 22 2M7 22C8 13 13 8 22 7M12 22c1-6 4-9 10-10" /><circle cx="20" cy="20" r="1" fill="#fff" /></Svg></Tray>
        <Tray><svg viewBox="0 0 22 22" className="w-[22px] h-[22px]" fill="#fff" aria-hidden="true"><path d="M11 0c5 1 7 4 7 9 0 4 1 6 4 8H0c3-2 4-4 4-8 0-5 2-8 7-9zM8 19h6c-1 3-5 3-6 0z" /></svg></Tray>
        <Tray><svg viewBox="0 0 22 18" className="w-[22px] h-[18px]" aria-hidden="true"><path d="M8 0h14v18H8zM0 9c2-4 5-6 9-6v13c-4 0-7-3-9-7z" fill="#4c8a14" /><path d="M2 9c5-8 12-7 17 0-5 7-13 6-17 0zM6 9c3-4 7-4 9 0-3 3-6 3-9 0z" fill="none" stroke="#1f3310" strokeWidth="1.500" /></svg></Tray>
        <Tray><Svg className="w-[26px] h-6"><path d="M7 9h15v11H7zM22 12h2v5h-2" fill="#fff" /><path d="M1 3v4c0 3 5 3 5 0V3M0 4h7M3.500 9v4h4M2 0v3M5 0v3" /></Svg></Tray>
        <Tray><svg viewBox="0 0 18 24" className="w-[18px] h-6" aria-hidden="true"><rect width="18" height="24" rx="7" fill="#0a78dc" /><path d="M5 8l8 8-4 4V4l4 4-8 8" fill="none" stroke="#fff" strokeWidth="1.500" /></svg></Tray>
        <Tray><Svg className="w-[22px] h-[26px]"><path d="M6 1h9v7H6zM4 8h13v8M4 8v14h10M8 4h1M12 4h1M14 19l3 3 6-6" /></Svg></Tray>
        <Tray><svg viewBox="0 0 24 24" className="w-6 h-6" aria-hidden="true"><circle cx="12" cy="12" r="12" fill="#f3d22a" /><path d="M12 0a12 12 0 0 1 12 12c-4-8-14-9-20-3A12 12 0 0 1 12 0zM12 24A12 12 0 0 1 1 16c6 5 15 4 21-3a12 12 0 0 1-10 11z" fill="#2fa13c" /><path d="M12 7v10M7 12h10" stroke="#1f8a34" strokeWidth="3" /></svg></Tray>
        <Tray><Svg className="w-[22px] h-[22px]"><path d="M1 8h5l6-6v20l-6-6H1z" /><path d="M15 8c2 2 2 6 0 8M18 5c4 4 4 10 0 14" stroke="#8c8c8c" /></Svg></Tray>
        <Tray><span className="text-xl leading-6">中</span></Tray>
      </div>
      <span className="flex items-center justify-center w-11">
        <svg viewBox="0 0 24 24" className="w-6 h-6" aria-hidden="true"><rect width="24" height="24" rx="3" fill="#3c8df0" /><circle cx="12" cy="11" r="6" fill="none" stroke="#fff" strokeWidth="2.500" /><path d="M15 16l4 4" stroke="#bfe86a" strokeWidth="2" /></svg>
      </span>
      <div className="flex flex-col items-center w-[120px] text-lg leading-6">
        <time>20:42 周日</time>
        <time>2022/9/18</time>
      </div>
      <button type="button" aria-label="通知" className="relative flex w-[60px] h-[34px] pl-[15px]">
        <svg viewBox="0 0 24 24" className="w-6 h-6" aria-hidden="true"><path d="M0 0h24v18H14l-5 5v-5H0z" fill="#fff" /><path d="M9 6l7 5-7 3z" fill="#222" /></svg>
        <span className="absolute left-[31px] top-[11px] w-[21px] h-[21px] bg-[#e00b0b] text-sm leading-[21px]">11</span>
      </button>
      <div className="w-px h-full mr-[6px] bg-[#6d6e70]" />
      <span className="absolute -right-1 bottom-2 text-lg leading-6 whitespace-nowrap text-[#c6c6c6]/80 font-['Liberation_Sans']">CSDN @QQ3295391197</span>
    </footer>
  );
}

/* Level meters of the recorder, shown over both window edges */
function LeftMeter() {
  return (
    <div className="absolute left-6 top-[10px] flex flex-col justify-end w-3 h-[85px] overflow-hidden rounded-full border border-[#3b4661] bg-linear-to-b from-[#22305a] from-40% to-[#5f5f5f] to-42%">
      <div className="h-4 bg-[repeating-linear-gradient(0deg,#2f6b3a_0_2px,#6fc183_2px_3px)]" />
    </div>
  );
}

function RightMeter() {
  return (
    <div className="absolute right-[21px] top-[219px] flex flex-col items-end w-[14px] h-[89px] pl-1 py-2 pr-[2px] rounded-l-md bg-[#474a56]">
      <div className="w-[7px] h-6 bg-[repeating-linear-gradient(0deg,#2c2f3c_0_2px,#565a6c_2px_3px)]" />
      <div className="w-[7px] flex-1 bg-linear-to-b from-[#c5b94a] via-[#6ab55e] to-[#33aab0]">
        <div className="h-full bg-[repeating-linear-gradient(0deg,#474a56_0_1px,transparent_1px_3px)]" />
      </div>
    </div>
  );
}

export default function App() {
  return (
    <div className="relative flex flex-col h-screen px-[21px] bg-black font-['Open_Sans','Noto_Sans_CJK_SC',sans-serif]">
      <TitleBar />
      <MenuRow />
      <Ribbon />
      <div className="relative flex flex-1 min-h-0">
        <Document />
        <ScrollColumn />
        <SideBar />
        <ReactionPill />
        <svg viewBox="0 0 14 20" className="absolute right-[65px] top-[320px] w-[14px] h-5" aria-hidden="true">
          <path d="M1 1v15l4-3 3 6 2-1-2-6h5z" fill="#fff" stroke="#111" />
        </svg>
      </div>
      <StatusBar />
      <Taskbar />
      <LeftMeter />
      <RightMeter />
    </div>
  );
}
